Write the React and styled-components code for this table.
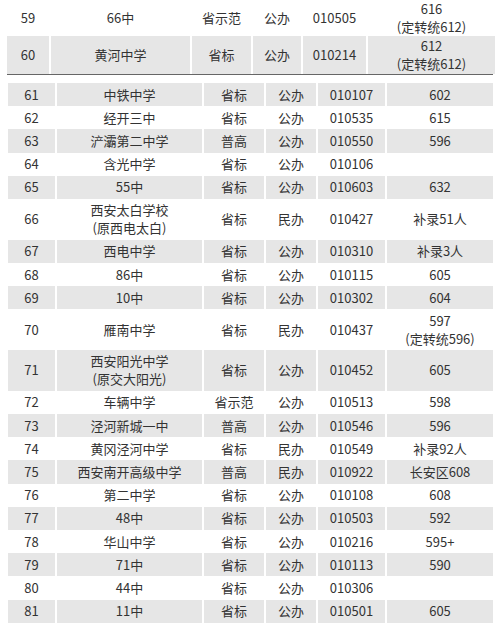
import React from "react";
import styled, { createGlobalStyle } from "styled-components";

const Global = createGlobalStyle`
  html, body { margin: 0; padding: 0; background: #fff; }
  body { font-family: "Noto Sans CJK SC", "Noto Sans", sans-serif; color: #333; }
`;

const Page = styled.div`
  width: 500px;
  height: 627px;
  overflow: hidden;
  background: #fff;
`;

const TopTable = styled.div`
  padding: 0 7px;
  display: flex;
  flex-direction: column;
`;

const Divider = styled.div`
  margin: 0 7px;
  height: 1px;
  background: #666;
`;

const MainTable = styled.div`
  margin-top: 8px;
  padding: 0 7px 0 8px;
  display: flex;
  flex-direction: column;
`;

const Row = styled.div`
  display: grid;
  grid-template-columns: ${(p) => p.$cols};
  column-gap: 2px;
  height: ${(p) => p.$h}px;
`;

const Cell = styled.div`
  background: ${(p) => (p.$gray ? "#e6e6e6" : "#fff")};
  display: flex;
  flex-direction: column;
  align-items: center;
  justify-content: center;
  font-size: 13px;
  line-height: 18px;
  text-align: center;
  white-space: nowrap;
  color: #333;
`;

const Line = styled.span`
  display: block;
  line-height: 18px;
`;

const TOP_COLS = "42px 139px 59px 48px 63px 127px";
const MAIN_COLS = "47px 145px 60px 50px 67px 106px";

const top = [
  { h: 36, gray: false, c: ["59", "66中", "省示范", "公办", "010505", ["616", "(定转统612)"]] },
  { h: 38, gray: true, c: ["60", "黄河中学", "省标", "公办", "010214", ["612", "(定转统612)"]] },
];

const S = 23.2;
const D = 40.8;

const main = [
  ["61", "中铁中学", "省标", "公办", "010107", "602"],
  ["62", "经开三中", "省标", "公办", "010535", "615"],
  ["63", "浐灞第二中学", "普高", "公办", "010550", "596"],
  ["64", "含光中学", "省标", "公办", "010106", ""],
  ["65", "55中", "省标", "公办", "010603", "632"],
  ["66", ["西安太白学校", "(原西电太白)"], "省标", "民办", "010427", "补录51人"],
  ["67", "西电中学", "省标", "公办", "010310", "补录3人"],
  ["68", "86中", "省标", "公办", "010115", "605"],
  ["69", "10中", "省标", "公办", "010302", "604"],
  ["70", "雁南中学", "省标", "民办", "010437", ["597", "(定转统596)"]],
  ["71", ["西安阳光中学", "(原交大阳光)"], "省标", "公办", "010452", "605"],
  ["72", "车辆中学", "省示范", "公办", "010513", "598"],
  ["73", "泾河新城一中", "普高", "公办", "010546", "596"],
  ["74", "黄冈泾河中学", "省标", "民办", "010549", "补录92人"],
  ["75", "西安南开高级中学", "普高", "民办", "010922", "长安区608"],
  ["76", "第二中学", "省标", "公办", "010108", "608"],
  ["77", "48中", "省标", "公办", "010503", "592"],
  ["78", "华山中学", "省标", "公办", "010216", "595+"],
  ["79", "71中", "省标", "公办", "010113", "590"],
  ["80", "44中", "省标", "公办", "010306", ""],
  ["81", "11中", "省标", "公办", "010501", "605"],
];

function Content({ v }) {
  if (Array.isArray(v)) {
    return v.map((line, i) => <Line key={i}>{line}</Line>);
  }
  return v;
}

export default function App() {
  return (
    <Page>
      <Global />
      <TopTable>
        {top.map((r, i) => (
          <Row key={i} $cols={TOP_COLS} $h={r.h}>
            {r.c.map((v, j) => (
              <Cell key={j} $gray={r.gray}>
                <Content v={v} />
              </Cell>
            ))}
          </Row>
        ))}
      </TopTable>
      <Divider />
      <MainTable>
        {main.map((r, i) => {
          const dbl = r.some((v) => Array.isArray(v));
          return (
            <Row key={i} $cols={MAIN_COLS} $h={dbl ? D : S}>
              {r.map((v, j) => (
                <Cell key={j} $gray={i % 2 === 0}>
                  <Content v={v} />
                </Cell>
              ))}
            </Row>
          );
        })}
      </MainTable>
    </Page>
  );
}
